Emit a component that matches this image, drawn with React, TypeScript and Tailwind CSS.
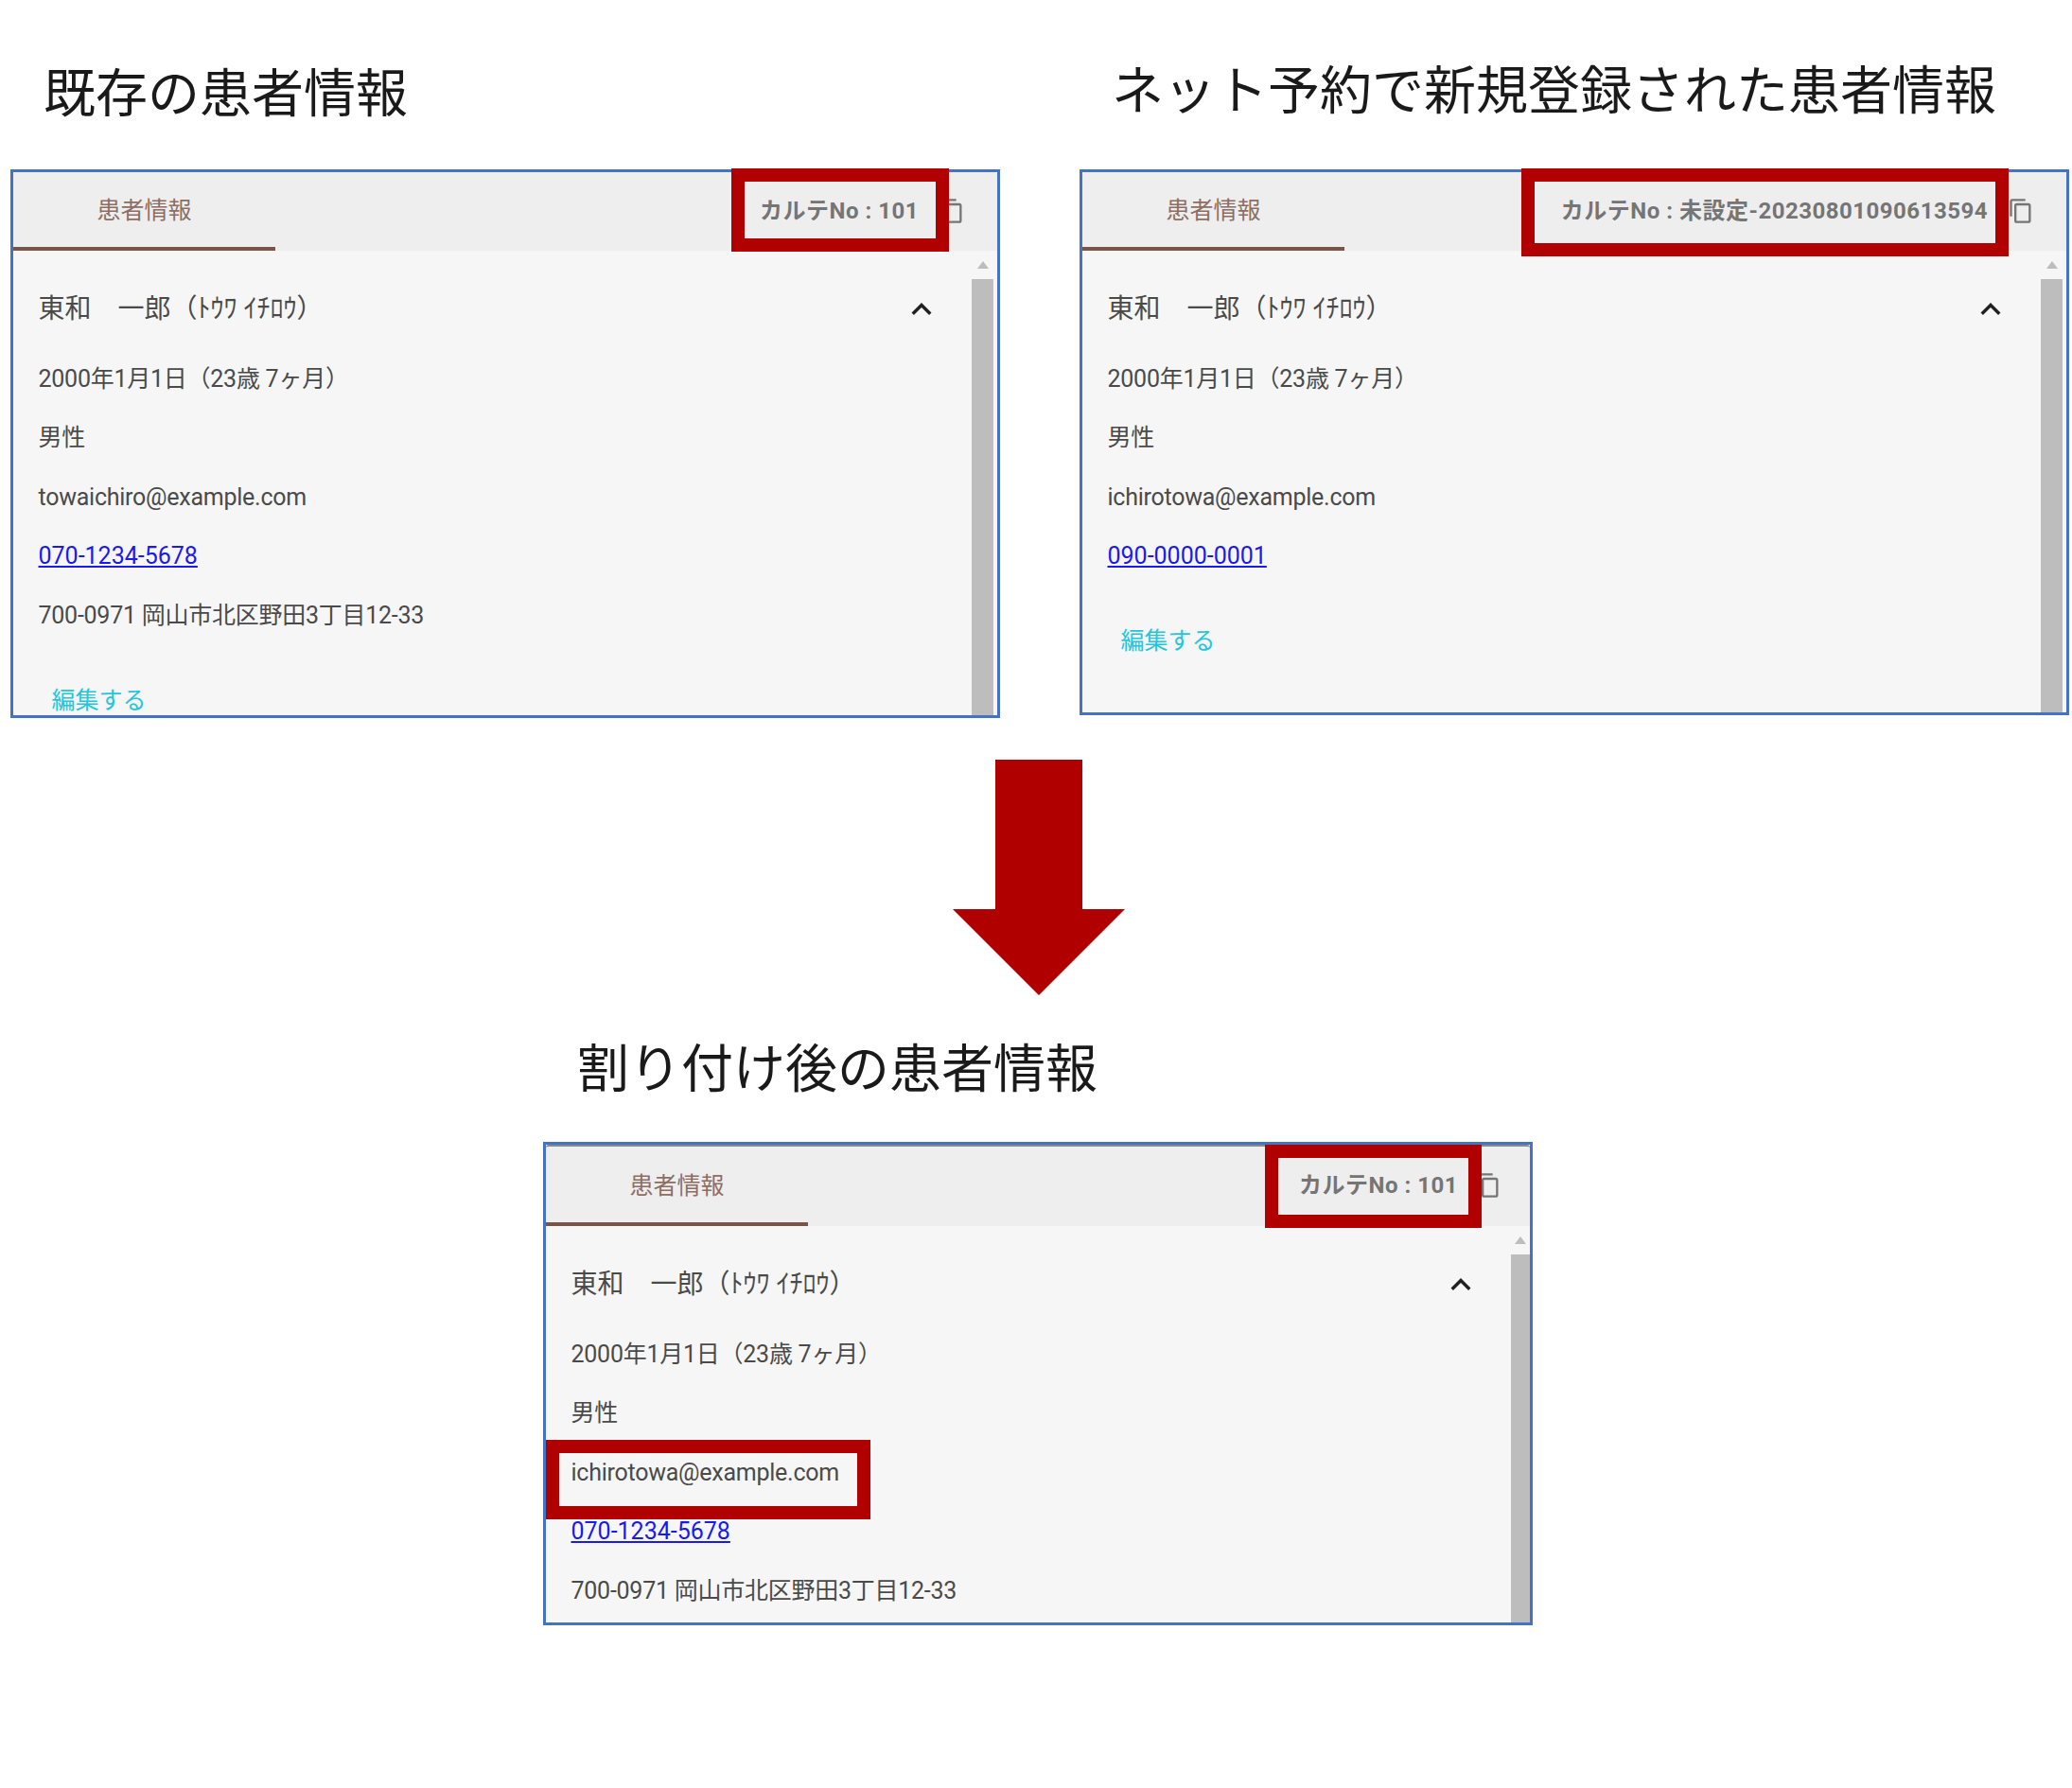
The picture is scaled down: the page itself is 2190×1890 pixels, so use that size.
import { ReactNode } from 'react';
import { MdContentCopy, MdExpandLess } from 'react-icons/md';

type PatientPanelProps = {
  karte: string;
  email: string;
  phone: string;
  address?: string;
  showEdit?: boolean;
  heightClass: string;
  headerClass: string;
  actionsClass?: string;
  copyClass?: string;
  scrollClass?: string;
  children?: ReactNode;
};

function Row({ children }: { children: ReactNode }) {
  return <div className="h-[62.5px] flex items-center whitespace-nowrap">{children}</div>;
}

function PatientPanel({
  karte,
  email,
  phone,
  address,
  showEdit = true,
  heightClass,
  headerClass,
  actionsClass = 'pr-[34px]',
  copyClass = 'ml-[21px]',
  scrollClass = 'w-[23px] mr-[4px]',
  children,
}: PatientPanelProps) {
  return (
    <div className={`relative w-[1046px] border-[3px] border-[#4472c4] bg-white flex flex-col ${heightClass}`}>
      <div className={`flex justify-between shrink-0 bg-[#eeeeee] rounded-t-[3px] ${headerClass}`}>
        <div className="w-[277px] pt-[3px] flex items-center justify-center border-b-[4px] border-[#795548] text-[25px] text-[#8d6e63]">
          患者情報
        </div>
        <div className={`flex items-center pb-[2px] ${actionsClass}`}>
          <span className="text-[24px] font-bold tracking-[0.5px] text-[#757575] whitespace-nowrap">{karte}</span>
          <MdContentCopy className={`w-[28px] h-[28px] text-[#757575] ${copyClass}`} />
        </div>
      </div>
      <div className="flex flex-1 min-h-0 overflow-hidden bg-[#f6f6f6] text-[25px] text-[#4a4a4a]">
        <div className="flex-1 pl-[26.5px] pt-[37px]">
          <div className="h-[50px] flex items-center justify-between pr-[32px] text-[28px] whitespace-nowrap">
            <span>東和　一郎（ﾄｳﾜ ｲﾁﾛｳ）</span>
            <MdExpandLess className="w-[42px] h-[42px] text-[#212121]" />
          </div>
          <div className="mt-[17px] tracking-[-0.25px]">
            <Row>2000年1月1日（23歳 7ヶ月）</Row>
            <Row>男性</Row>
            <Row>{email}</Row>
            <Row>
              <a href="#" className="text-[#1a1aee] underline tracking-normal">{phone}</a>
            </Row>
            {address && <Row>{address}</Row>}
          </div>
          {showEdit && (
            <div className="mt-[34px] pl-[14px] h-[50px] flex items-center text-[#26c6da]">編集する</div>
          )}
        </div>
        <div className={`shrink-0 flex flex-col ${scrollClass}`}>
          <div className="h-[30px] shrink-0 flex items-center justify-center">
            <svg width="12" height="8" viewBox="0 0 12 8">
              <path d="M6 0 L12 8 L0 8 Z" fill="#bdbdbd" />
            </svg>
          </div>
          <div className="flex-1 bg-[#bdbdbd]" />
        </div>
      </div>
      {children}
    </div>
  );
}

export default function App() {
  return (
    <div className="w-[2190px] h-[1890px] bg-white font-['Roboto','Noto_Sans_CJK_JP',sans-serif]">
      <div className="flex items-start pl-[11px]">
        <div className="w-[1046px]">
          <h2 className="h-[179px] pt-[9px] pl-[35px] flex items-center text-[55px] font-normal text-[#1a1a1a] font-['Noto_Sans_CJK_JP',sans-serif]">
            既存の患者情報
          </h2>
          <PatientPanel
            karte="カルテNo : 101"
            email="towaichiro@example.com"
            phone="070-1234-5678"
            address="700-0971 岡山市北区野田3丁目12-33"
            heightClass="h-[580px]"
            headerClass="h-[83px]"
          >
            <div className="absolute left-[759px] -top-[4px] w-[230px] h-[88px] border-[14px] border-[#b00000]" />
          </PatientPanel>
        </div>
        <div className="w-[1046px] ml-[84px]">
          <h2 className="h-[179px] pt-[3px] pl-[34px] flex items-center text-[55px] font-normal text-[#1a1a1a] whitespace-nowrap font-['Noto_Sans_CJK_JP',sans-serif]">
            ネット予約で新規登録された患者情報
          </h2>
          <PatientPanel
            karte="カルテNo : 未設定-20230801090613594"
            email="ichirotowa@example.com"
            phone="090-0000-0001"
            heightClass="h-[577px]"
            headerClass="h-[83px]"
          >
            <div className="absolute left-[464px] -top-[4px] w-[515px] h-[93px] border-[14px] border-[#b00000]" />
          </PatientPanel>
        </div>
      </div>

      <svg className="block mt-[44px] ml-[1007px]" width="182" height="249" viewBox="0 0 182 249">
        <path d="M45 0 H137 V158 H182 L91 249 L0 158 H45 Z" fill="#b00000" />
      </svg>

      <div className="ml-[574px] w-[1046px]">
        <h2 className="h-[155px] pb-[8px] pl-[36px] flex items-center text-[55px] font-normal text-[#1a1a1a] font-['Noto_Sans_CJK_JP',sans-serif]">
          割り付け後の患者情報
        </h2>
        <PatientPanel
          karte="カルテNo : 101"
          email="ichirotowa@example.com"
          phone="070-1234-5678"
          address="700-0971 岡山市北区野田3丁目12-33"
          showEdit={false}
          heightClass="h-[511px]"
          headerClass="h-[86px] border-t-[2px] border-[#8a8a8a]"
          actionsClass="pr-[30px]"
          copyClass="ml-[18px]"
          scrollClass="w-[20px]"
        >
          <div className="absolute left-[760px] top-0 w-[229px] h-[88px] border-[14px] border-[#b00000]" />
          <div className="absolute left-0 top-[312px] w-[343px] h-[84px] border-[14px] border-[#b00000]" />
        </PatientPanel>
      </div>
    </div>
  );
}
